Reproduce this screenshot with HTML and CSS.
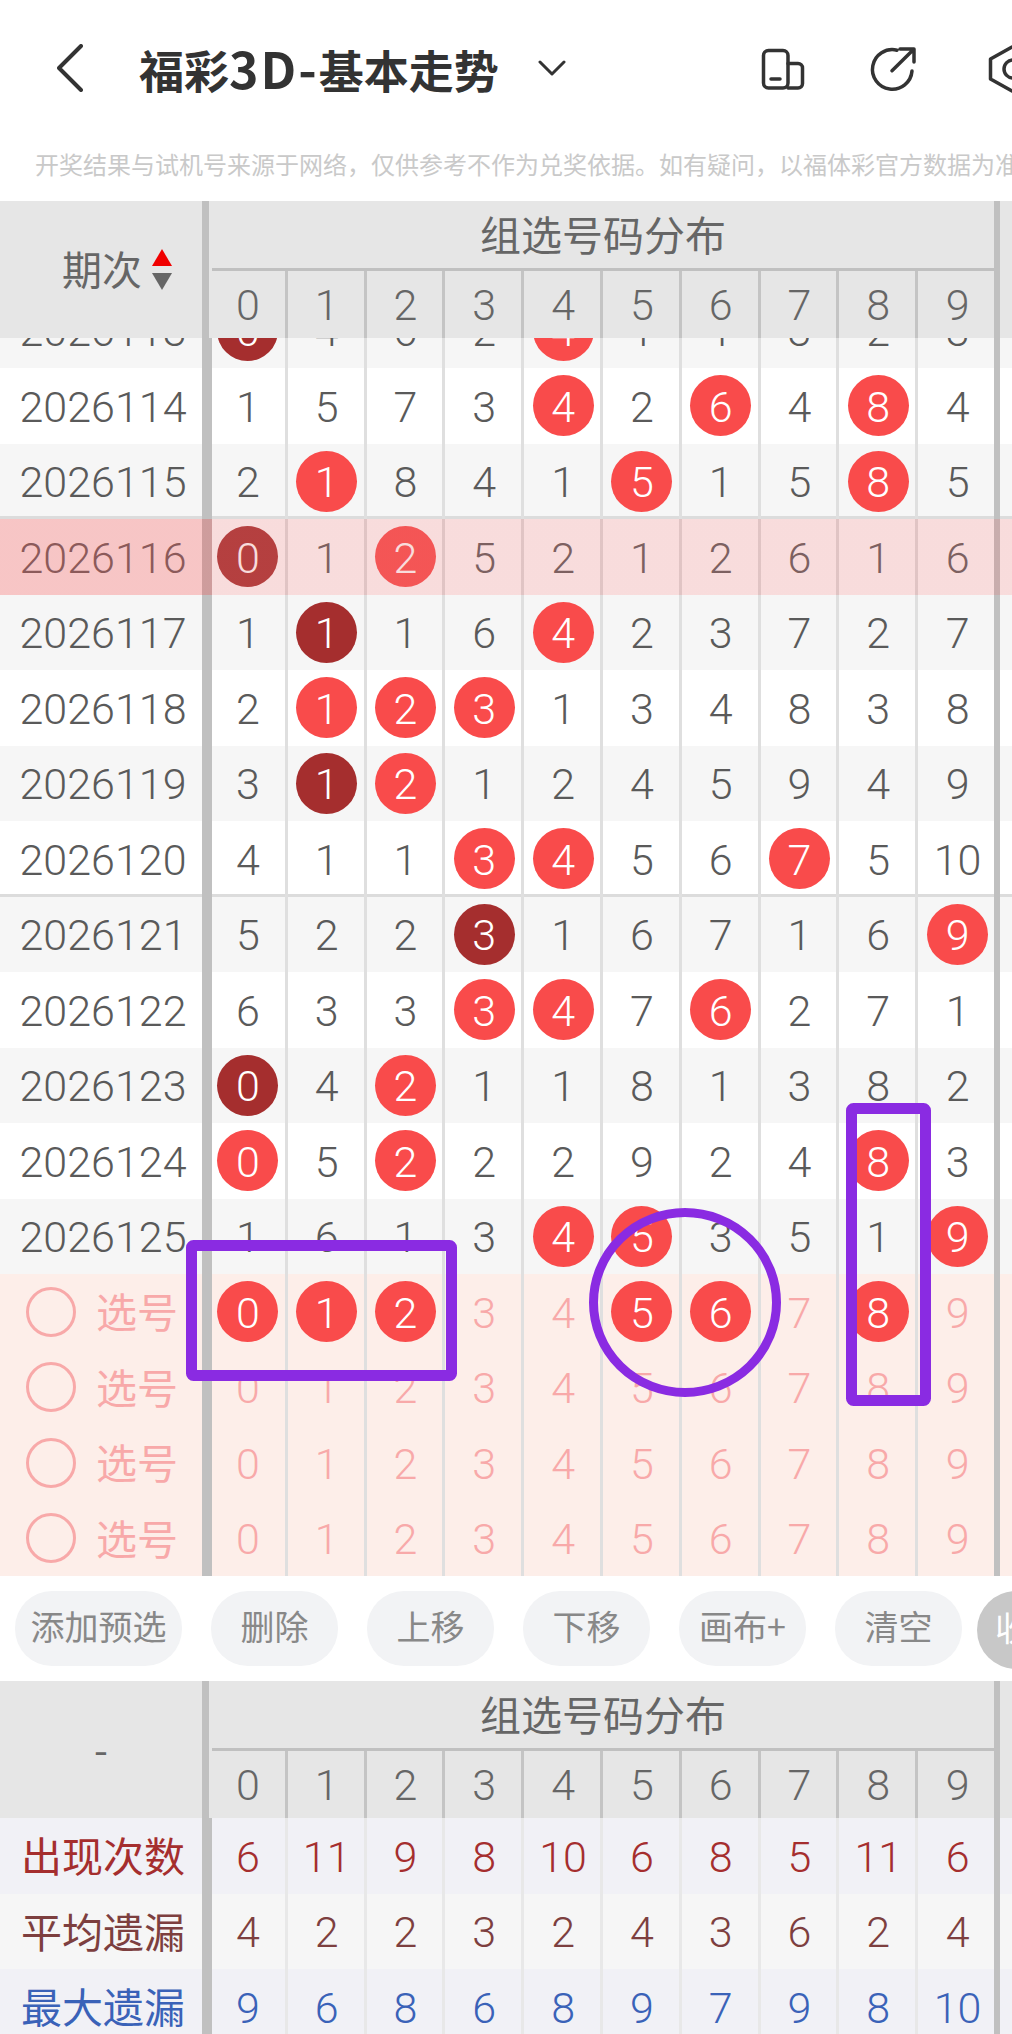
FILE: index.html
```html
<!DOCTYPE html>
<html lang="zh-CN">
	<head>
		<meta charset="UTF-8">
		<title>福彩3D-基本走势</title>
		<link rel="stylesheet" href="styles.css">
	</head>
	<body>
		<div class="page">
			<div class="nav">
				<svg class="nav-back" viewBox="0 0 26 48"><path d="M24 2 2 24l22 22"/></svg>
				<h1 class="nav-title">福彩<span class="nav-title-latin">3D-</span>基本走势</h1>
				<svg class="nav-caret" viewBox="0 0 28 16"><path d="M2 2l12 12L26 2"/></svg>
				<div class="nav-icons">
					<svg class="nav-icon" width="44" height="44" viewBox="0 0 44 44"><rect x="2.5" y="4.5" width="24.500" height="37.500" rx="5"/><path d="M27 17.500h10a4.500 4.500 0 0 1 4.500 4.500v15.500a4.500 4.500 0 0 1-4.500 4.500H27M10 33h9"/></svg>
					<svg class="nav-icon" width="46" height="44" viewBox="0 0 46 44"><path d="M28 4.200A19.800 19.800 0 1 0 43 25M31 3h14v13M23 24.700 44 4"/></svg>
					<svg class="nav-icon" width="44" height="44" viewBox="0 0 44 44"><path d="M33 1 11.500 13v20L33 45l22-12V13z"/><circle cx="34" cy="23" r="9"/></svg>
				</div>
			</div>
			<div class="notice">开奖结果与试机号来源于网络，仅供参考不作为兑奖依据。如有疑问，以福体彩官方数据为准。</div>

			<div class="thead">
				<div class="thead-side"><span>期次</span><i class="sort"><b class="sort-up"></b><b class="sort-down"></b></i></div>
				<div class="thead-main">
					<div class="thead-title">组选号码分布</div>
					<div class="thead-cols">
						<span>0</span><span>1</span><span>2</span><span>3</span><span>4</span><span>5</span><span>6</span><span>7</span><span>8</span><span>9</span>
					</div>
				</div>
				<div class="edge"></div>
			</div>

			<div class="tbody">
				<div class="row row-gray row-first"><div class="period">2026113</div><span class="num"><b class="ball dark">0</b></span><span class="num">4</span><span class="num">6</span><span class="num">2</span><span class="num"><b class="ball">4</b></span><span class="num">1</span><span class="num">1</span><span class="num">3</span><span class="num">2</span><span class="num">3</span><div class="edge"></div></div>
				<div class="row"><div class="period">2026114</div><span class="num">1</span><span class="num">5</span><span class="num">7</span><span class="num">3</span><span class="num"><b class="ball">4</b></span><span class="num">2</span><span class="num"><b class="ball">6</b></span><span class="num">4</span><span class="num"><b class="ball">8</b></span><span class="num">4</span><div class="edge"></div></div>
				<div class="row row-gray row-line"><div class="period">2026115</div><span class="num">2</span><span class="num"><b class="ball">1</b></span><span class="num">8</span><span class="num">4</span><span class="num">1</span><span class="num"><b class="ball">5</b></span><span class="num">1</span><span class="num">5</span><span class="num"><b class="ball">8</b></span><span class="num">5</span><div class="edge"></div></div>
				<div class="row"><div class="period">2026116</div><span class="num"><b class="ball dark">0</b></span><span class="num">1</span><span class="num"><b class="ball">2</b></span><span class="num">5</span><span class="num">2</span><span class="num">1</span><span class="num">2</span><span class="num">6</span><span class="num">1</span><span class="num">6</span><div class="edge"></div><div class="row-mask"></div></div>
				<div class="row row-gray"><div class="period">2026117</div><span class="num">1</span><span class="num"><b class="ball dark">1</b></span><span class="num">1</span><span class="num">6</span><span class="num"><b class="ball">4</b></span><span class="num">2</span><span class="num">3</span><span class="num">7</span><span class="num">2</span><span class="num">7</span><div class="edge"></div></div>
				<div class="row"><div class="period">2026118</div><span class="num">2</span><span class="num"><b class="ball">1</b></span><span class="num"><b class="ball">2</b></span><span class="num"><b class="ball">3</b></span><span class="num">1</span><span class="num">3</span><span class="num">4</span><span class="num">8</span><span class="num">3</span><span class="num">8</span><div class="edge"></div></div>
				<div class="row row-gray"><div class="period">2026119</div><span class="num">3</span><span class="num"><b class="ball dark">1</b></span><span class="num"><b class="ball">2</b></span><span class="num">1</span><span class="num">2</span><span class="num">4</span><span class="num">5</span><span class="num">9</span><span class="num">4</span><span class="num">9</span><div class="edge"></div></div>
				<div class="row row-line"><div class="period">2026120</div><span class="num">4</span><span class="num">1</span><span class="num">1</span><span class="num"><b class="ball">3</b></span><span class="num"><b class="ball">4</b></span><span class="num">5</span><span class="num">6</span><span class="num"><b class="ball">7</b></span><span class="num">5</span><span class="num">10</span><div class="edge"></div></div>
				<div class="row row-gray"><div class="period">2026121</div><span class="num">5</span><span class="num">2</span><span class="num">2</span><span class="num"><b class="ball dark">3</b></span><span class="num">1</span><span class="num">6</span><span class="num">7</span><span class="num">1</span><span class="num">6</span><span class="num"><b class="ball">9</b></span><div class="edge"></div></div>
				<div class="row"><div class="period">2026122</div><span class="num">6</span><span class="num">3</span><span class="num">3</span><span class="num"><b class="ball">3</b></span><span class="num"><b class="ball">4</b></span><span class="num">7</span><span class="num"><b class="ball">6</b></span><span class="num">2</span><span class="num">7</span><span class="num">1</span><div class="edge"></div></div>
				<div class="row row-gray"><div class="period">2026123</div><span class="num"><b class="ball dark">0</b></span><span class="num">4</span><span class="num"><b class="ball">2</b></span><span class="num">1</span><span class="num">1</span><span class="num">8</span><span class="num">1</span><span class="num">3</span><span class="num">8</span><span class="num">2</span><div class="edge"></div></div>
				<div class="row"><div class="period">2026124</div><span class="num"><b class="ball">0</b></span><span class="num">5</span><span class="num"><b class="ball">2</b></span><span class="num">2</span><span class="num">2</span><span class="num">9</span><span class="num">2</span><span class="num">4</span><span class="num"><b class="ball">8</b></span><span class="num">3</span><div class="edge"></div></div>
				<div class="row row-gray"><div class="period">2026125</div><span class="num">1</span><span class="num">6</span><span class="num">1</span><span class="num">3</span><span class="num"><b class="ball">4</b></span><span class="num"><b class="ball">5</b></span><span class="num">3</span><span class="num">5</span><span class="num">1</span><span class="num"><b class="ball">9</b></span><div class="edge"></div></div>

				<div class="row row-pick"><div class="period"><i class="radio"></i>选号</div><span class="num"><b class="ball">0</b></span><span class="num"><b class="ball">1</b></span><span class="num"><b class="ball">2</b></span><span class="num">3</span><span class="num">4</span><span class="num"><b class="ball">5</b></span><span class="num"><b class="ball">6</b></span><span class="num">7</span><span class="num"><b class="ball">8</b></span><span class="num">9</span><div class="edge"></div></div>
				<div class="row row-pick"><div class="period"><i class="radio"></i>选号</div><span class="num">0</span><span class="num">1</span><span class="num">2</span><span class="num">3</span><span class="num">4</span><span class="num">5</span><span class="num">6</span><span class="num">7</span><span class="num">8</span><span class="num">9</span><div class="edge"></div></div>
				<div class="row row-pick"><div class="period"><i class="radio"></i>选号</div><span class="num">0</span><span class="num">1</span><span class="num">2</span><span class="num">3</span><span class="num">4</span><span class="num">5</span><span class="num">6</span><span class="num">7</span><span class="num">8</span><span class="num">9</span><div class="edge"></div></div>
				<div class="row row-pick"><div class="period"><i class="radio"></i>选号</div><span class="num">0</span><span class="num">1</span><span class="num">2</span><span class="num">3</span><span class="num">4</span><span class="num">5</span><span class="num">6</span><span class="num">7</span><span class="num">8</span><span class="num">9</span><div class="edge"></div></div>
			</div>

			<div class="toolbar">
				<button class="chip chip-wide">添加预选</button>
				<button class="chip">删除</button>
				<button class="chip">上移</button>
				<button class="chip">下移</button>
				<button class="chip">画布+</button>
				<button class="chip">清空</button>
				<button class="chip-fold">收起</button>
			</div>

			<div class="thead">
				<div class="thead-side thead-dash">-</div>
				<div class="thead-main">
					<div class="thead-title">组选号码分布</div>
					<div class="thead-cols">
						<span>0</span><span>1</span><span>2</span><span>3</span><span>4</span><span>5</span><span>6</span><span>7</span><span>8</span><span>9</span>
					</div>
				</div>
				<div class="edge"></div>
			</div>

			<div class="stats">
				<div class="row row-stat stat-count"><div class="period">出现次数</div><span class="num">6</span><span class="num">11</span><span class="num">9</span><span class="num">8</span><span class="num">10</span><span class="num">6</span><span class="num">8</span><span class="num">5</span><span class="num">11</span><span class="num">6</span><div class="edge"></div></div>
				<div class="row row-stat stat-avg"><div class="period">平均遗漏</div><span class="num">4</span><span class="num">2</span><span class="num">2</span><span class="num">3</span><span class="num">2</span><span class="num">4</span><span class="num">3</span><span class="num">6</span><span class="num">2</span><span class="num">4</span><div class="edge"></div></div>
				<div class="row row-stat stat-max"><div class="period">最大遗漏</div><span class="num">9</span><span class="num">6</span><span class="num">8</span><span class="num">6</span><span class="num">8</span><span class="num">9</span><span class="num">7</span><span class="num">9</span><span class="num">8</span><span class="num">10</span><div class="edge"></div></div>
			</div>

			<!-- hand drawn marks over the chart -->
			<svg class="marks" viewBox="0 0 1012 2034">
				<rect x="191.500" y="1245.500" width="260" height="130" rx="2"/>
				<rect x="851.500" y="1108.500" width="74" height="292" rx="2"/>
				<ellipse cx="685" cy="1302.500" rx="91.500" ry="90"/>
			</svg>
		</div>
	</body>
</html>
```

FILE: styles.css
```css
* {
	box-sizing: border-box;
}

body {
	margin: 0;
	background-color: white;
	font-family: Roboto, "Noto Sans CJK SC", sans-serif;
	font-weight: 300;
	color: #5a5a5a;
}

.page {
	position: relative;
	width: 1012px;
	height: 2034px;
	overflow: hidden;
}

/* nav */
.nav {
	display: flex;
	align-items: center;
	height: 136px;
	padding-left: 57px;
}

.nav svg {
	flex: none;
	fill: none;
	stroke: #333;
	stroke-linecap: round;
	stroke-linejoin: round;
}

.nav-back {
	width: 26px;
	height: 48px;
	stroke-width: 4;
}

.nav-title {
	flex: none;
	width: 358px;
	margin: -3px 0 0 56px;
	font-family: "Noto Sans CJK SC", sans-serif;
	font-size: 45px;
	font-weight: 700;
	line-height: 1;
	white-space: nowrap;
	color: #333;
}

.nav-title-latin {
	font-size: 50px;
	line-height: 1;
	letter-spacing: 2px;
}

.nav-caret {
	width: 28px;
	height: 16px;
	margin-left: 41px;
	stroke-width: 3;
}

.nav-icons {
	display: flex;
	gap: 64px;
	margin-left: 195px;
}

.nav-icon {
	overflow: visible;
	stroke-width: 3.5;
}

.notice {
	height: 65px;
	padding-left: 35px;
	font-family: "Noto Sans CJK SC", sans-serif;
	font-size: 24px;
	font-weight: 400;
	line-height: 56px;
	white-space: nowrap;
	color: #c9c9c9;
}

/* table head */
.thead {
	position: relative;
	z-index: 1;
	display: flex;
	height: 137px;
	background-color: #e6e6e6;
	color: #666;
}

.thead-side {
	display: flex;
	align-items: center;
	justify-content: flex-end;
	gap: 10px;
	width: 209px;
	padding-right: 30px;
	padding-bottom: 3px;
	border-right: 7px solid #c0c0c0;
	font-family: "Noto Sans CJK SC", sans-serif;
	font-size: 40px;
	font-weight: 400;
}

.thead-dash {
	justify-content: center;
	padding-right: 0;
}

.sort {
	display: flex;
	flex-direction: column;
	gap: 7px;
	padding-top: 3px;
}

.sort b {
	display: block;
	border-left: 10.500px solid transparent;
	border-right: 10.500px solid transparent;
}

.sort-up {
	border-bottom: 17px solid #f00000;
}

.sort-down {
	border-top: 17px solid #666;
}

.thead-main {
	width: 788px;
}

.thead-title {
	height: 70px;
	border-bottom: 3px solid #c0c0c0;
	margin-left: 3px;
	margin-right: 3px;
	font-family: "Noto Sans CJK SC", sans-serif;
	font-size: 41px;
	font-weight: 400;
	line-height: 64px;
	text-align: center;
}

.thead-cols {
	display: flex;
	height: 67px;
}

.thead-cols span {
	width: 78.800px;
	padding-left: 2px;
	border-right: 3px solid #c4c4c4;
	font-size: 43px;
	line-height: 68px;
	text-align: center;
}

.thead-cols span:last-child {
	padding-left: 0;
	border-right: none;
}

.edge {
	flex: none;
	width: 6px;
	margin-left: -3px;
	background-color: #c0c0c0;
}

/* table rows */
.tbody {
	height: 1238px;
	overflow: hidden;
}

.row {
	position: relative;
	display: flex;
	height: 75.500px;
}

.row-first {
	margin-top: -45.500px;
}

.row-gray {
	background-color: #f6f6f6;
}

.row-line {
	box-shadow: inset 0 -3px 0 #dcdcdc;
}

.period {
	display: flex;
	align-items: center;
	justify-content: center;
	flex: none;
	width: 209px;
	padding-top: 2px;
	padding-left: 4px;
	border-right: 7px solid #c0c0c0;
	font-size: 43px;
}

.num {
	display: flex;
	align-items: center;
	justify-content: center;
	flex: none;
	width: 78.800px;
	padding-top: 2px;
	padding-left: 2px;
	border-right: 3px solid #dfdfdf;
	font-size: 43px;
}

.period + .num {
	box-shadow: inset 3px 0 0 #c0c0c0;
}

.num:nth-last-child(2) {
	padding-left: 0;
	border-right: none;
}

.row-mask {
	position: absolute;
	top: 0;
	left: 0;
	right: 0;
	bottom: 0;
	background: linear-gradient(to right, rgba(232, 90, 90, 0.35) 212px, rgba(228, 116, 116, 0.25) 212px);
}

.row:has(.row-mask) .num:nth-last-child(3) {
	padding-left: 0;
	border-right: none;
}

.ball {
	display: flex;
	align-items: center;
	justify-content: center;
	width: 61px;
	height: 61px;
	margin-top: -2px;
	padding-top: 2px;
	border-radius: 50%;
	background-color: #f94b4b;
	font-weight: 300;
	color: white;
}

.ball.dark {
	background-color: #a52e2e;
}

/* picking rows */
.row-pick {
	background-color: #fdeee9;
	color: #f8a9a9;
}

.row-pick .period {
	justify-content: flex-start;
	gap: 20px;
	padding-top: 0;
	padding-bottom: 3px;
	padding-left: 26px;
	font-family: "Noto Sans CJK SC", sans-serif;
	font-size: 41px;
	font-weight: 400;
}

.radio {
	width: 50px;
	height: 50px;
	margin-top: 3px;
	border: 3px solid #f8a9a9;
	border-radius: 50%;
}

/* action chips */
.toolbar {
	display: flex;
	gap: 29px;
	height: 105px;
	padding: 15px 0 0 15px;
	background-color: white;
}

.chip {
	flex: none;
	width: 127px;
	height: 75px;
	padding: 0 0 7px;
	border: none;
	border-radius: 37px;
	background-color: #f2f3f5;
	font-family: "Noto Sans CJK SC", sans-serif;
	font-size: 34px;
	color: #888;
}

.chip-wide {
	width: 167px;
}

.chip-fold {
	flex: none;
	width: 78px;
	height: 78px;
	margin-left: -14px;
	padding: 0 0 7px 18px;
	border: none;
	border-radius: 50%;
	background-color: #c8c8c8;
	font-family: "Noto Sans CJK SC", sans-serif;
	font-size: 34px;
	white-space: nowrap;
	text-align: left;
	color: white;
}

/* statistics rows */
.row-stat .period {
	padding-top: 0;
	padding-bottom: 3px;
	font-family: "Noto Sans CJK SC", sans-serif;
	font-size: 41px;
	font-weight: 400;
}

.row-stat .num {
	border-right-color: #e8e8e8;
}

.stat-count {
	background-color: #f1f1f6;
	color: #a52e2e;
}

.stat-avg {
	background-color: #f6f6f6;
	color: #7d3f3f;
}

.stat-max {
	background-color: #f1f1f6;
	color: #3a62b8;
}

.marks {
	position: absolute;
	top: 0;
	left: 0;
	width: 1012px;
	height: 2034px;
	z-index: 2;
	fill: none;
	stroke: #8a2be2;
	stroke-width: 11;
	stroke-linejoin: round;
}

.marks ellipse {
	stroke-width: 9;
}
```
